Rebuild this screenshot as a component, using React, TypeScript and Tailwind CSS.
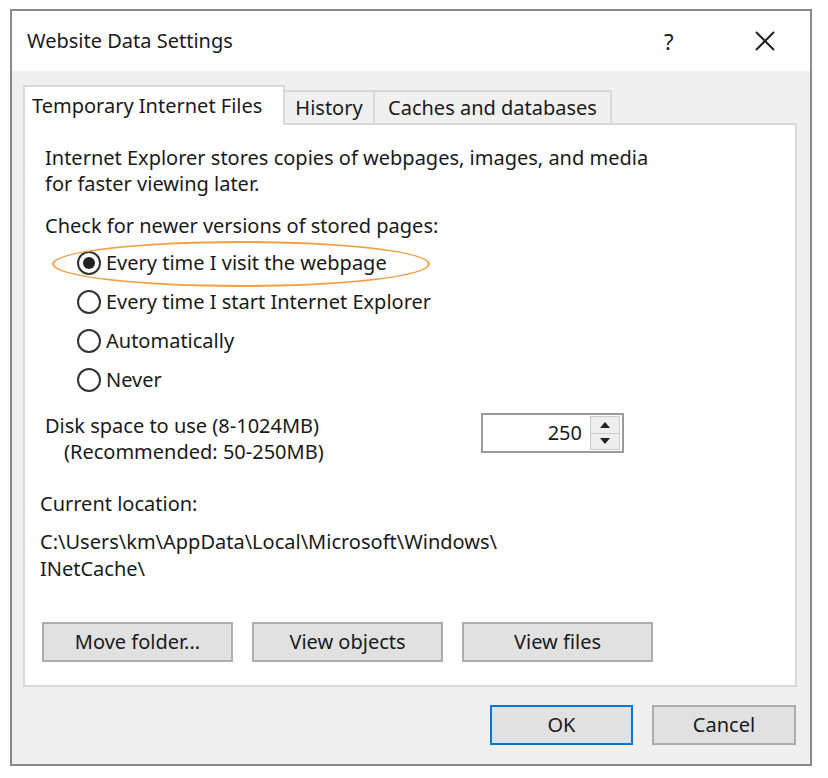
import React from "react";

const Radio = ({ checked, label }: { checked?: boolean; label: string }) => (
  <div className="flex items-center h-[39px]">
    <div className="w-[24px] h-[24px] rounded-full border-2 border-[#333] bg-white flex items-center justify-center">
      {checked && <div className="w-[12px] h-[12px] rounded-full bg-[#222]" />}
    </div>
    <span className="ml-[5px]">{label}</span>
  </div>
);

const Btn = ({ label, cls = "" }: { label: string; cls?: string }) => (
  <div className={`h-[40px] flex items-center justify-center bg-[#e1e1e1] border-2 border-[#adadad] ${cls}`}>{label}</div>
);

export default function App() {
  return (
    <div className="w-[828px] h-[778px] bg-white pt-[9px] pl-[10px] text-[20px] text-[#1a1a1a]" style={{ fontFamily: '"Noto Sans", "Liberation Sans", sans-serif' }}>
      <div className="w-[802px] h-[757px] border-2 border-[#8a8a8a] bg-[#f0f0f0] flex flex-col">
        <div className="h-[60px] bg-white flex items-center pl-[15px] shrink-0">
          <span className="flex-1">Website Data Settings</span>
          <span className="w-[90px] text-[22px]">?</span>
          <svg width="22" height="22" viewBox="0 0 22 22" className="mr-[34px]"><path d="M2 2 L20 20 M20 2 L2 20" stroke="#222" strokeWidth="2" /></svg>
        </div>
        <div className="pl-[11px] pt-[14px] flex items-end h-[52px]">
          <div className="w-[262px] h-[38px] bg-white border-2 border-b-0 border-[#d9d9d9] pl-[7px] flex items-center relative z-10 mb-[-2px] h-[40px]">Temporary Internet Files</div>
          <div className="w-[90px] h-[33px] bg-[#f0f0f0] border-2 border-l-0 border-b-0 border-[#d9d9d9] flex items-center justify-center">History</div>
          <div className="w-[237px] h-[33px] bg-[#f0f0f0] border-2 border-l-0 border-b-0 border-[#d9d9d9] flex items-center justify-center">Caches and databases</div>
        </div>
        <div className="ml-[11px] w-[774px] h-[564px] bg-white border-2 border-[#d9d9d9] pl-[20px] pr-[20px] pt-[20px] relative">
          <div className="leading-[26px]">Internet Explorer stores copies of webpages, images, and media<br />for faster viewing later.</div>
          <div className="mt-[16px] leading-[26px]">Check for newer versions of stored pages:</div>
          <div className="pl-[32px] mt-[4px]">
            <Radio checked label="Every time I visit the webpage" />
            <Radio label="Every time I start Internet Explorer" />
            <Radio label="Automatically" />
            <Radio label="Never" />
          </div>
          <div className="absolute left-[27px] top-[116px] w-[378px] h-[46px] rounded-[50%] border-2 border-[#f0a040]" />
          <div className="flex mt-[14px]">
            <div className="w-[436px] leading-[26px]">
              <div>Disk space to use (8-1024MB)</div>
              <div className="pl-[19px]">(Recommended: 50-250MB)</div>
            </div>
            <div className="w-[143px] h-[40px] border-2 border-[#9a9a9a] flex items-center">
              <span className="flex-1 text-right pr-[8px]">250</span>
              <div className="w-[30px] h-[34px] border border-[#ccc] bg-[#eee] flex flex-col mr-[2px]">
                <div className="flex-1 flex items-center justify-center border-b border-[#ccc]"><svg width="10" height="6"><path d="M0 6 L5 0 L10 6Z" fill="#222" /></svg></div>
                <div className="flex-1 flex items-center justify-center"><svg width="10" height="6"><path d="M0 0 L5 6 L10 0Z" fill="#222" /></svg></div>
              </div>
            </div>
          </div>
          <div className="mt-[26px] -ml-[5px] leading-[26px]">Current location:</div>
          <div className="mt-[11px] -ml-[5px] leading-[27px]">C:\Users\km\AppData\Local\Microsoft\Windows\<br />INetCache\</div>
          <div className="flex gap-[19px] mt-[40px] -ml-[3px]">
            <Btn label="Move folder..." cls="w-[191px]" />
            <Btn label="View objects" cls="w-[191px]" />
            <Btn label="View files" cls="w-[191px]" />
          </div>
        </div>
        <div className="flex justify-end gap-[19px] pr-[14px] mt-[18px]">
          <Btn label="OK" cls="w-[143px] !border-[#0078d7] !h-[40px]" />
          <Btn label="Cancel" cls="w-[144px]" />
        </div>
      </div>
    </div>
  );
}
